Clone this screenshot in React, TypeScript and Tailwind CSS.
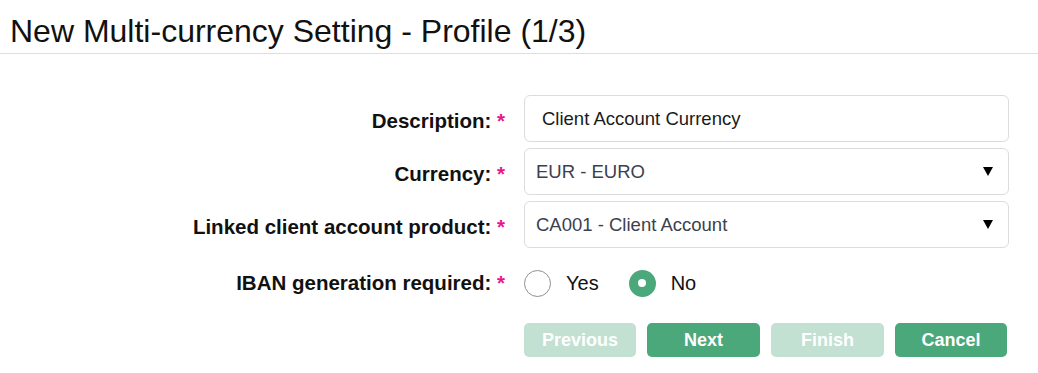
import React, { useState } from 'react';

const GREEN = 'bg-[#4ba87b]';

function Label({ text, pad = true }: { text: string; pad?: boolean }) {
  return (
    <div className={`w-[505px] shrink-0 text-right text-[20.5px] font-bold text-[#111] ${pad ? 'pt-[6px]' : 'pt-0'}`}>
      {text} <span className="text-[#e8168a]">*</span>
    </div>
  );
}

function Caret() {
  return (
    <svg width="10" height="9" viewBox="0 0 10 9" className="shrink-0">
      <polygon points="0,0 10,0 5,9" fill="#000" />
    </svg>
  );
}

function Radio({ checked, label, onClick }: { checked: boolean; label: string; onClick: () => void }) {
  return (
    <button type="button" onClick={onClick} className="flex items-center gap-[15px]">
      {checked ? (
        <span className="flex h-[27px] w-[27px] items-center justify-center rounded-full bg-[#4ba87b]">
          <span className="h-[8px] w-[8px] rounded-full bg-white" />
        </span>
      ) : (
        <span className="h-[27px] w-[27px] rounded-full border border-[#8f8f8f] bg-white" />
      )}
      <span className="text-[20px] text-[#111]">{label}</span>
    </button>
  );
}

export default function App() {
  const [description, setDescription] = useState('Client Account Currency');
  const [iban, setIban] = useState<'yes' | 'no'>('no');

  return (
    <div className="h-[373px] w-[1038px] bg-white font-['Liberation_Sans',Arial,sans-serif]">
      {/* Header */}
      <div className="h-[54px] border-b border-[#dedede] pl-[10px] pt-[11px]">
        <h1 className="text-[32px] leading-[40px] text-[#111]">New Multi-currency Setting - Profile (1/3)</h1>
      </div>

      {/* Form */}
      <div className="flex flex-col pt-[41px]">
        <div className="flex h-[47px] items-center gap-[19px]">
          <Label text="Description:" />
          <input
            value={description}
            onChange={(e) => setDescription(e.target.value)}
            className="h-[47px] w-[485px] rounded-[6px] border border-[#dcdcdc] px-[17px] text-[18.5px] text-[#1a1a1a] outline-none"
          />
        </div>

        <div className="mt-[6px] flex h-[47px] items-center gap-[19px]">
          <Label text="Currency:" />
          <div className="flex h-[47px] w-[485px] items-center justify-between rounded-[6px] border border-[#dcdcdc] pl-[11px] pr-[15px]">
            <span className="text-[18.5px] text-[#3b414d]">EUR - EURO</span>
            <Caret />
          </div>
        </div>

        <div className="mt-[6px] flex h-[47px] items-center gap-[19px]">
          <Label text="Linked client account product:" />
          <div className="flex h-[47px] w-[485px] items-center justify-between rounded-[6px] border border-[#dcdcdc] pl-[11px] pr-[15px]">
            <span className="text-[18.5px] text-[#3b414d]">CA001 - Client Account</span>
            <Caret />
          </div>
        </div>

        <div className="mt-[12px] flex h-[46px] items-center gap-[19px]">
          <Label text="IBAN generation required:" pad={false} />
          <div className="flex items-center gap-[30px]">
            <Radio checked={iban === 'yes'} label="Yes" onClick={() => setIban('yes')} />
            <Radio checked={iban === 'no'} label="No" onClick={() => setIban('no')} />
          </div>
        </div>

        {/* Buttons */}
        <div className="mt-[17px] flex gap-[11px] pl-[524px]">
          <button disabled className="h-[34px] w-[112px] rounded-[5px] bg-[#c2e1d2] text-[18px] font-bold text-white">
            Previous
          </button>
          <button className={`h-[34px] w-[113px] rounded-[5px] ${GREEN} text-[18px] font-bold text-white`}>Next</button>
          <button disabled className="h-[34px] w-[113px] rounded-[5px] bg-[#c2e1d2] text-[18px] font-bold text-white">
            Finish
          </button>
          <button className={`h-[34px] w-[112px] rounded-[5px] ${GREEN} text-[18px] font-bold text-white`}>Cancel</button>
        </div>
      </div>
    </div>
  );
}
